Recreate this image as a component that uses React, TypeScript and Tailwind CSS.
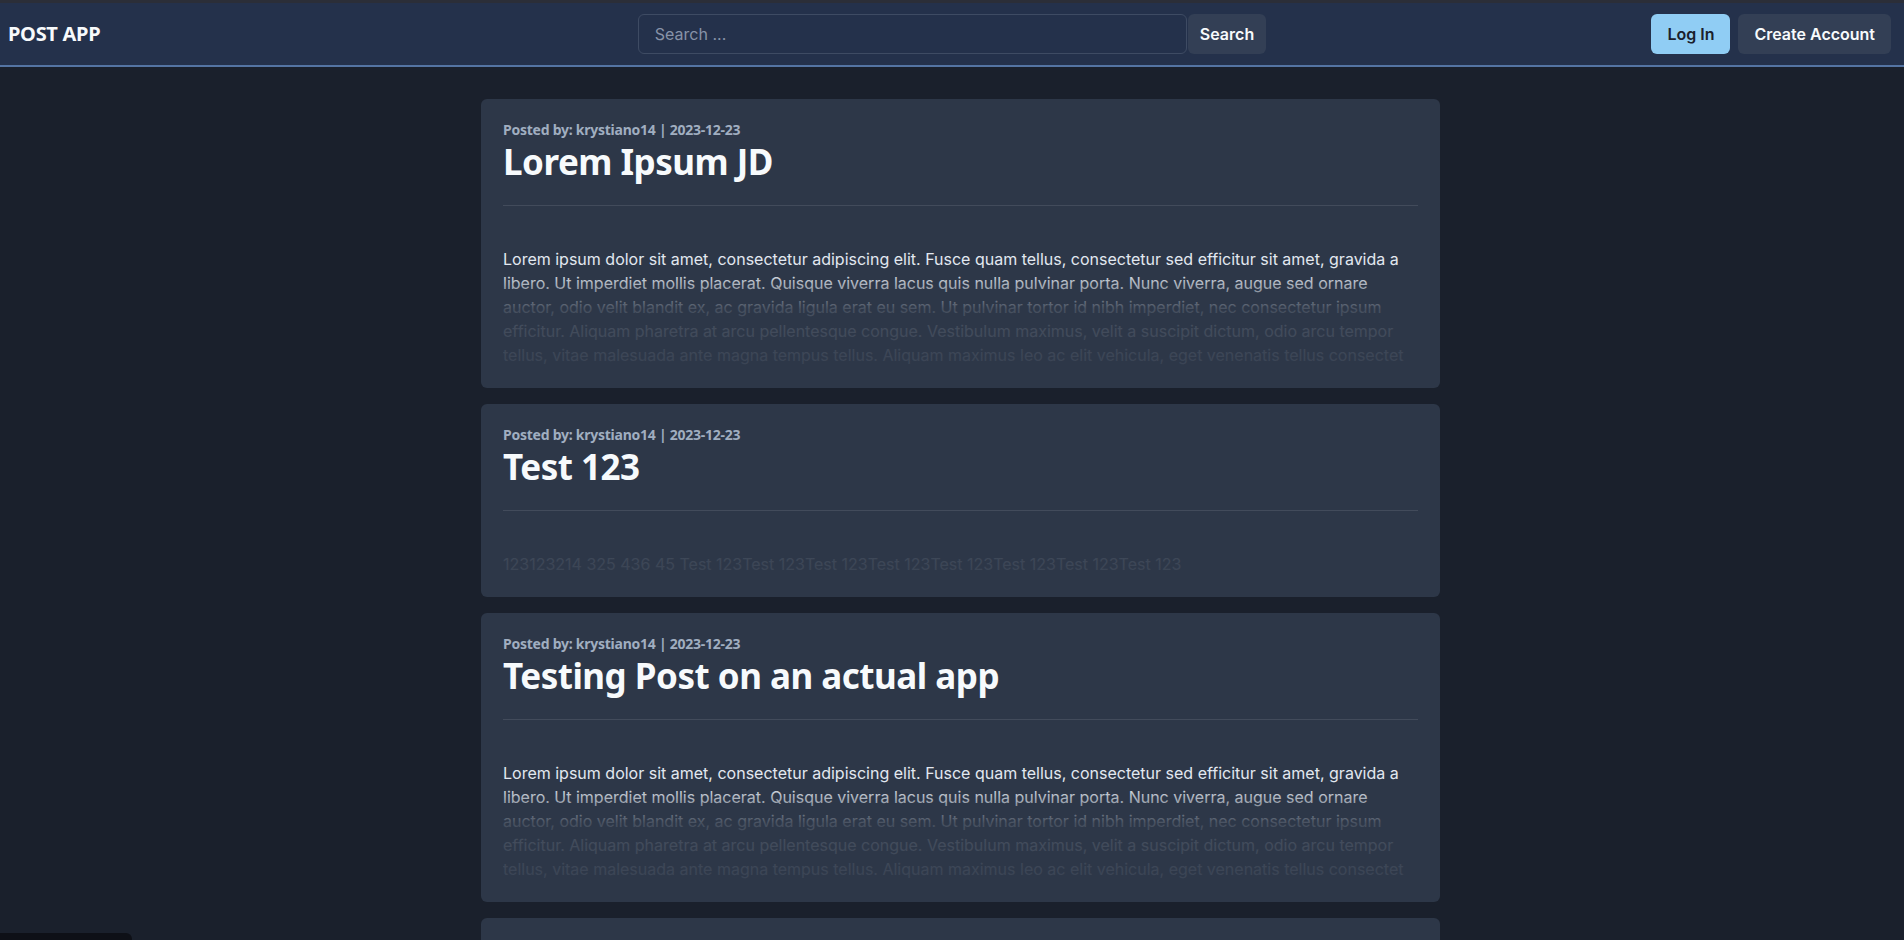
import { useState } from 'react';

type Post = {
  id: number;
  author: string;
  date: string;
  title: string;
  body: string;
};

const lorem =
  'Lorem ipsum dolor sit amet, consectetur adipiscing elit. Fusce quam tellus, consectetur sed efficitur sit amet, gravida a libero. Ut imperdiet mollis placerat. Quisque viverra lacus quis nulla pulvinar porta. Nunc viverra, augue sed ornare auctor, odio velit blandit ex, ac gravida ligula erat eu sem. Ut pulvinar tortor id nibh imperdiet, nec consectetur ipsum efficitur. Aliquam pharetra at arcu pellentesque congue. Vestibulum maximus, velit a suscipit dictum, odio arcu tempor tellus, vitae malesuada ante magna tempus tellus. Aliquam maximus leo ac elit vehicula, eget venenatis tellus consectet';

const posts: Post[] = [
  { id: 1, author: 'krystiano14', date: '2023-12-23', title: 'Lorem Ipsum JD', body: lorem },
  {
    id: 2,
    author: 'krystiano14',
    date: '2023-12-23',
    title: 'Test 123',
    body: '123123214 325 436 45 Test 123Test 123Test 123Test 123Test 123Test 123Test 123Test 123',
  },
  { id: 3, author: 'krystiano14', date: '2023-12-23', title: 'Testing Post on an actual app', body: lorem },
  { id: 4, author: 'krystiano14', date: '2023-12-22', title: 'Hello World', body: lorem },
];

function Header() {
  const [query, setQuery] = useState('');

  return (
    <header className="border-t-[3px] border-[#2b2e38] bg-[#24314b]">
      <div className="flex h-[62px] items-center px-2">
        <div className="flex flex-1">
          <span className="font-['Noto_Sans',sans-serif] text-[20px] font-bold tracking-[-0.3px] text-[#f7fafc]">
            POST APP
          </span>
        </div>

        <form className="ml-[5px] flex items-center" onSubmit={(e) => e.preventDefault()}>
          <input
            value={query}
            onChange={(e) => setQuery(e.target.value)}
            placeholder="Search ..."
            className="h-10 w-[549px] rounded-md border border-[#3e4b63] bg-transparent px-4 font-['Inter',sans-serif] text-[16px] text-[#e2e8f0] outline-none placeholder:text-[#8793a8]"
          />
          <button
            type="submit"
            className="ml-px h-10 rounded-md bg-[#333f55] px-3 font-['Inter',sans-serif] text-[16px] font-semibold text-[#f7fafc]"
          >
            Search
          </button>
        </form>

        <div className="flex flex-1 justify-end gap-2 pr-[5px]">
          <button className="h-10 rounded-md bg-[#90cdf4] px-4 font-['Inter',sans-serif] text-[16px] font-semibold text-[#1a202c]">
            Log In
          </button>
          <button className="h-10 rounded-md bg-[#333f55] px-4 font-['Inter',sans-serif] text-[16px] font-semibold text-[#f7fafc]">
            Create Account
          </button>
        </div>
      </div>
      <div className="h-[2px] bg-[#5474a3]" />
    </header>
  );
}

function PostCard({ post }: { post: Post }) {
  return (
    <article className="rounded-md bg-[#2d3748] px-[22px] pt-5 pb-[21px]">
      <p className="font-['Noto_Sans',sans-serif] text-[14px] leading-[21px] font-bold tracking-[-0.25px] text-[#a0aec0]">
        Posted by: {post.author} | {post.date}
      </p>
      <h2 className="mb-[22px] font-['Noto_Sans',sans-serif] text-[35px] leading-[43px] font-bold tracking-[-0.5px] text-[#f7fafc]">
        {post.title}
      </h2>
      <div className="h-px bg-[#424b5b]" />
      <div className="relative mt-[41px] max-h-[120px] overflow-hidden">
        <p className="font-['Inter',sans-serif] text-[16px] leading-6 text-[#e2e8f0]">{post.body}</p>
        <div className="pointer-events-none absolute inset-x-0 bottom-0 h-[96px] bg-[linear-gradient(to_bottom,rgba(45,55,72,0)_0%,rgba(45,55,72,0.86)_40%,rgba(45,55,72,0.93)_100%)]" />
      </div>
    </article>
  );
}

export default function App() {
  return (
    <div className="min-h-screen bg-[#1a202c]">
      <Header />

      <main className="flex justify-center pt-8 pb-10 pl-[17px]">
        <div className="flex w-[959px] flex-col gap-4">
          {posts.map((post) => (
            <PostCard key={post.id} post={post} />
          ))}
        </div>
      </main>

      <div className="fixed top-[933px] left-0 h-6 w-[132px] rounded-tr-md bg-[#0e1017] px-1 pt-[3px] font-['Inter',sans-serif] text-[12px] text-[#e8eaee]">
        localhost:3000/post/5
      </div>
    </div>
  );
}
